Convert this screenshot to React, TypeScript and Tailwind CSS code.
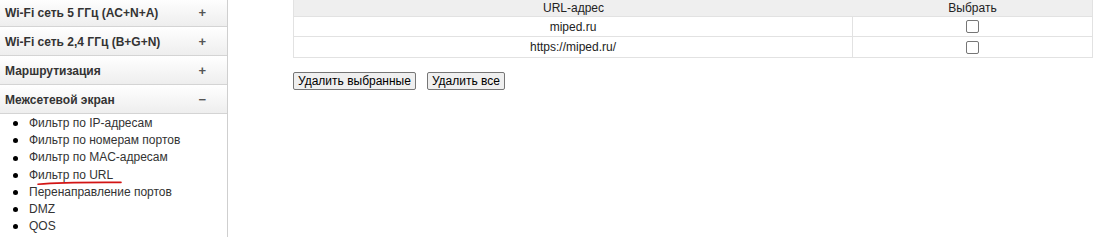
import React from 'react'

const sections = [
  { title: 'Wi-Fi сеть 5 ГГц (AC+N+A)', open: false },
  { title: 'Wi-Fi сеть 2,4 ГГц (B+G+N)', open: false },
  { title: 'Маршрутизация', open: false },
  { title: 'Межсетевой экран', open: true },
]

const links = [
  'Фильтр по IP-адресам',
  'Фильтр по номерам портов',
  'Фильтр по MAC-адресам',
  'Фильтр по URL',
  'Перенаправление портов',
  'DMZ',
  'QOS',
]

const urls = ['miped.ru', 'https://miped.ru/']

function Sidebar() {
  return (
    <div className="w-[228px] shrink-0 border-r border-[#cfcfcf] -mt-[2px] min-h-[240px]">
      {sections.map((s) => (
        <div
          key={s.title}
          className="h-[29px] flex items-center justify-between pl-[5px] pr-[21px] pt-[1px] border-b border-[#d4d4d4] bg-gradient-to-b from-[#ffffff] to-[#eeeeee] text-[12px] font-bold text-[#333]"
        >
          <span>{s.title}</span>
          <span className="text-[#555] text-[13px]">{s.open ? '−' : '+'}</span>
        </div>
      ))}
      <ul className="pt-[1px] text-[12px] leading-[17.2px] text-[#333]">
        {links.map((l) => (
          <li key={l} className="flex items-center relative">
            <span className="ml-[13px] mr-[11px] w-[5px] h-[5px] rounded-full bg-black" />
            <span>{l}</span>
            {l === 'Фильтр по URL' && (
              <svg className="absolute left-[36px] top-[13px]" width="90" height="6" viewBox="0 0 90 6">
                <path d="M2 4.2 C 20 2.6, 50 2.2, 85 2.4" stroke="#d21414" strokeWidth="1.6" fill="none" strokeLinecap="round" />
              </svg>
            )}
          </li>
        ))}
      </ul>
    </div>
  )
}

function Checkbox() {
  return <span className="inline-block w-[13px] h-[13px] rounded-[2px] border border-[#767676] bg-white align-middle" />
}

export default function App() {
  return (
    <div className="w-[1115px] h-[237px] overflow-hidden bg-white flex" style={{ fontFamily: '"Liberation Sans", Arial, sans-serif' }}>
      <Sidebar />
      <div className="pl-[65px] pt-0">
        <div className="w-[800px] border-l border-r border-b border-[#e2e2e2] text-[12px] text-[#222]">
          <div className="flex h-[17px] bg-[#efefef] border-b border-[#e2e2e2] items-center leading-none">
            <div className="w-[559px] text-center">URL-адрес</div>
            <div className="flex-1 text-center">Выбрать</div>
          </div>
          {urls.map((u, i) => (
            <div key={u} className={`flex h-[20px] items-center ${i < urls.length - 1 ? 'border-b border-[#e2e2e2]' : ''}`}>
              <div className="w-[559px] h-full flex items-center justify-center border-r border-[#e2e2e2]">{u}</div>
              <div className="flex-1 flex items-center justify-center">
                <Checkbox />
              </div>
            </div>
          ))}
        </div>
        <div className="flex gap-[11px] mt-[14px]">
          <button className="h-[18px] px-[4px] border border-[#767676] rounded-[2px] bg-[#efefef] text-[12px] leading-none text-black">
            Удалить выбранные
          </button>
          <button className="h-[18px] px-[4px] border border-[#767676] rounded-[2px] bg-[#efefef] text-[12px] leading-none text-black">
            Удалить все
          </button>
        </div>
      </div>
    </div>
  )
}
